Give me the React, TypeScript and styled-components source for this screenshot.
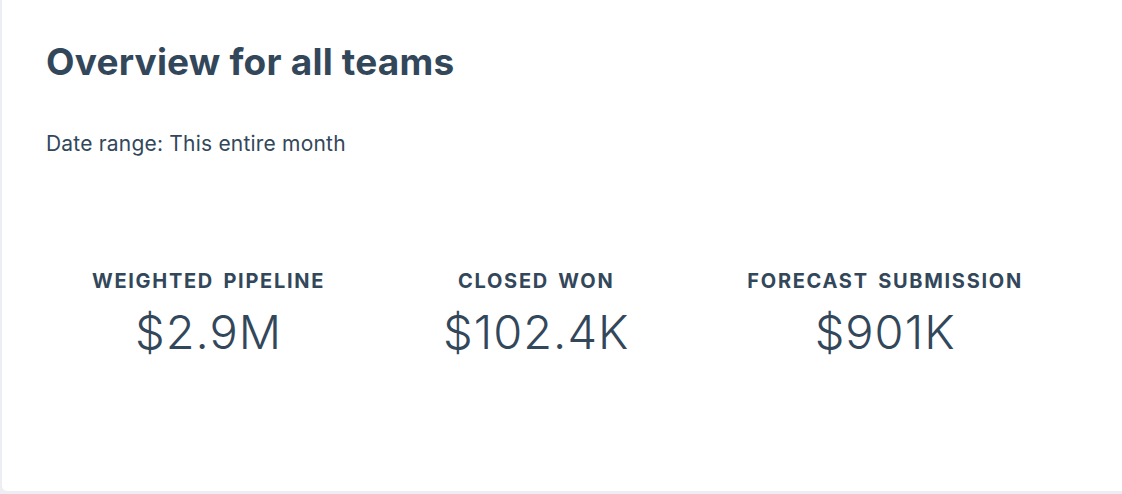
import React from "react";
import styled, { createGlobalStyle } from "styled-components";

const GlobalStyle = createGlobalStyle`
  html, body {
    margin: 0;
    padding: 0;
    background: #eceef3;
    overflow: hidden;
  }
  body {
    font-family: Inter, "Noto Sans", sans-serif;
    color: #33475b;
  }
`;

const metrics = [
  { label: "Weighted pipeline", value: "$2.9M" },
  { label: "Closed won", value: "$102.4K" },
  { label: "Forecast submission", value: "$901K" },
];

export default function App() {
  return (
    <>
      <GlobalStyle />
      <Page>
        <Card>
          <Title>Overview for all teams</Title>
          <DateRange>Date range: This entire month</DateRange>
          <MetricRow>
            {metrics.map((m) => (
              <Metric key={m.label}>
                <MetricLabel>{m.label}</MetricLabel>
                <MetricValue>{m.value}</MetricValue>
              </Metric>
            ))}
          </MetricRow>
        </Card>
      </Page>
    </>
  );
}

const Page = styled.div`
  display: flow-root;
  height: 494px;
  padding-left: 2px;
  overflow: hidden;
`;

const Card = styled.section`
  box-sizing: border-box;
  width: calc(100% + 12px);
  height: 497px;
  margin-top: -6px;
  background: #ffffff;
  border-radius: 5px;
  padding: 46px 0 0 44px;
`;

const Title = styled.h2`
  margin: 0;
  font-size: 37px;
  line-height: 44px;
  font-weight: 700;
  letter-spacing: 0.2px;
`;

const DateRange = styled.p`
  margin: 47px 0 0;
  font-size: 21px;
  line-height: 26px;
  font-weight: 400;
  letter-spacing: 0.2px;
`;

const MetricRow = styled.div`
  display: flex;
  gap: 118px;
  margin-top: 113px;
  padding-left: 46px;
`;

const Metric = styled.div`
  display: flex;
  flex-direction: column;
  align-items: center;
`;

const MetricLabel = styled.span`
  font-size: 20px;
  line-height: 22px;
  font-weight: 700;
  text-transform: uppercase;
  letter-spacing: 1.7px;
  word-spacing: 3px;
`;

const MetricValue = styled.span`
  margin-top: 12px;
  font-size: 47px;
  line-height: 56px;
  font-weight: 300;
  letter-spacing: 1px;
`;
